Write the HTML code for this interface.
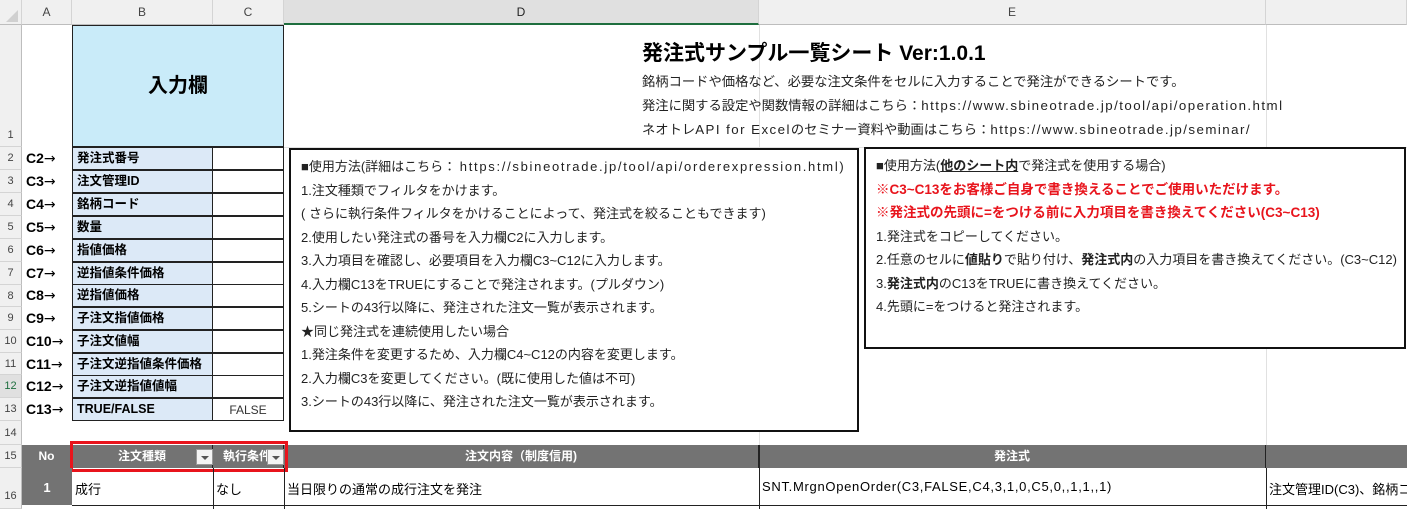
<!DOCTYPE html>
<html><head><meta charset="utf-8"><style>
*{margin:0;padding:0;box-sizing:border-box}
body{width:1407px;height:509px;overflow:hidden;background:#fff;position:relative;font-family:"Liberation Sans","Noto Sans CJK JP",sans-serif;color:#000}
.a{position:absolute}
.l{letter-spacing:1.45px}
.gl{position:absolute;background:#e1e1e1}
.hd{position:absolute;top:0;height:25px;background:#f0f0f0;border-right:1px solid #d4d4d4;border-bottom:1px solid #bdbdbd;font-size:12px;color:#444;text-align:center;line-height:25px}
.rn{position:absolute;left:0;width:22px;background:#f0f0f0;border-bottom:1px solid #d4d4d4;border-right:1px solid #bdbdbd;font-size:11px;color:#444;text-align:center}
.lab{position:absolute;left:72px;width:141px;height:23px;background:#dce9f7;border:1px solid #222;font-size:12.5px;font-weight:bold;line-height:21px;padding-left:4px;white-space:nowrap}
.cc{position:absolute;left:213px;width:71px;height:23px;border:1px solid #222;border-left:none}
.ar{position:absolute;left:26px;font-size:14px;font-weight:bold;line-height:23px}
.ar i{font-style:normal;font-family:"DejaVu Sans",sans-serif;font-weight:normal;font-size:14px}
.box{position:absolute;border:2px solid #111;background:#fff;font-size:13px;line-height:23.5px;padding:5px 0 0 10px;white-space:nowrap;color:#222}
.red{color:#e8141c;font-weight:bold}
.th{position:absolute;top:445px;height:23px;background:#737373;color:#fff;font-size:12px;font-weight:bold;text-align:center;line-height:23px;border-right:1px solid #222}
.dd{position:absolute;width:17px;height:16px;background:#f4f4f4;border:1px solid #999;top:449px}
.dd:after{content:"";position:absolute;left:4px;top:6px;border-left:4px solid transparent;border-right:4px solid transparent;border-top:4px solid #555}
</style></head><body>
<div class="gl" style="left:759px;top:25px;width:1px;height:420px"></div>
<div class="gl" style="left:1266px;top:25px;width:1px;height:420px"></div>
<div class="gl" style="left:284px;top:147px;width:1123px;height:1px"></div>
<div class="gl" style="left:284px;top:445px;width:1123px;height:1px"></div>
<div class="gl" style="left:22px;top:445px;width:50px;height:1px"></div>
<div class="gl" style="left:72px;top:25px;width:1px;height:122px"></div>
<div class="hd" style="left:0;width:22px;background:#f0f0f0"></div>
<div class="a" style="left:6px;top:10px;border-left:12px solid transparent;border-bottom:12px solid #d0d0d0"></div>
<div class="hd" style="left:22px;width:50px">A</div>
<div class="hd" style="left:72px;width:141px">B</div>
<div class="hd" style="left:213px;width:71px">C</div>
<div class="hd" style="left:284px;width:475px;background:#e0e0e0;border-bottom:2px solid #1e6e3e;color:#222">D</div>
<div class="hd" style="left:759px;width:507px">E</div>
<div class="hd" style="left:1266px;width:141px"></div>
<div class="rn" style="top:25px;height:122px;line-height:220px">1</div>
<div class="rn" style="top:147px;height:23px;line-height:23px">2</div>
<div class="rn" style="top:170px;height:23px;line-height:23px">3</div>
<div class="rn" style="top:193px;height:23px;line-height:23px">4</div>
<div class="rn" style="top:216px;height:23px;line-height:23px">5</div>
<div class="rn" style="top:239px;height:23px;line-height:23px">6</div>
<div class="rn" style="top:262px;height:23px;line-height:23px">7</div>
<div class="rn" style="top:285px;height:22px;line-height:22px">8</div>
<div class="rn" style="top:307px;height:23px;line-height:23px">9</div>
<div class="rn" style="top:330px;height:23px;line-height:23px">10</div>
<div class="rn" style="top:353px;height:22px;line-height:22px">11</div>
<div class="rn" style="top:375px;height:23px;line-height:23px;color:#1e6e3e;background:#e0e0e0">12</div>
<div class="rn" style="top:398px;height:23px;line-height:23px">13</div>
<div class="rn" style="top:421px;height:24px;line-height:24px">14</div>
<div class="rn" style="top:445px;height:23px;line-height:23px">15</div>
<div class="rn" style="top:468px;height:41px;line-height:56px">16</div>
<div class="a" style="left:72px;top:25px;width:212px;height:122px;background:#c9ebf9;border:1px solid #222;font-size:20px;font-weight:bold;text-align:center;line-height:120px">入力欄</div>
<div class="ar" style="top:147px">C2<i>→</i></div><div class="lab" style="top:147px">発注式番号</div><div class="cc" style="top:147px"></div>
<div class="ar" style="top:170px">C3<i>→</i></div><div class="lab" style="top:170px">注文管理ID</div><div class="cc" style="top:170px"></div>
<div class="ar" style="top:193px">C4<i>→</i></div><div class="lab" style="top:193px">銘柄コード</div><div class="cc" style="top:193px"></div>
<div class="ar" style="top:216px">C5<i>→</i></div><div class="lab" style="top:216px">数量</div><div class="cc" style="top:216px"></div>
<div class="ar" style="top:239px">C6<i>→</i></div><div class="lab" style="top:239px">指値価格</div><div class="cc" style="top:239px"></div>
<div class="ar" style="top:262px">C7<i>→</i></div><div class="lab" style="top:262px">逆指値条件価格</div><div class="cc" style="top:262px"></div>
<div class="ar" style="top:284px">C8<i>→</i></div><div class="lab" style="top:284px">逆指値価格</div><div class="cc" style="top:284px"></div>
<div class="ar" style="top:307px">C9<i>→</i></div><div class="lab" style="top:307px">子注文指値価格</div><div class="cc" style="top:307px"></div>
<div class="ar" style="top:330px">C10<i>→</i></div><div class="lab" style="top:330px">子注文値幅</div><div class="cc" style="top:330px"></div>
<div class="ar" style="top:353px">C11<i>→</i></div><div class="lab" style="top:353px">子注文逆指値条件価格</div><div class="cc" style="top:353px"></div>
<div class="ar" style="top:375px">C12<i>→</i></div><div class="lab" style="top:375px">子注文逆指値値幅</div><div class="cc" style="top:375px"></div>
<div class="ar" style="top:398px">C13<i>→</i></div><div class="lab" style="top:398px">TRUE/FALSE</div><div class="cc" style="top:398px;font-size:12px;text-align:center;line-height:22px;color:#333">FALSE</div>
<div class="a" style="left:642px;top:37px;font-size:21px;font-weight:bold;white-space:nowrap">発注式サンプル一覧シート Ver:1.0.1</div>
<div class="a" style="left:642px;top:70px;font-size:13.3px;line-height:24px;white-space:nowrap;color:#222">銘柄コードや価格など、必要な注文条件をセルに入力することで発注ができるシートです。<br>発注に関する設定や関数情報の詳細はこちら：<span class="l">https://www.sbineotrade.jp/tool/api/operation.html</span><br>ネオトレ<span class="l">API for Excel</span>のセミナー資料や動画はこちら：<span class="l">https://www.sbineotrade.jp/seminar/</span></div>
<div class="box" style="left:289px;top:148px;width:570px;height:284px">■使用方法(詳細はこちら： <span style="letter-spacing:1.7px">https://sbineotrade.jp/tool/api/orderexpression.html)</span><br>1.注文種類でフィルタをかけます。<br>( さらに執行条件フィルタをかけることによって、発注式を絞ることもできます)<br>2.使用したい発注式の番号を入力欄C2に入力します。<br>3.入力項目を確認し、必要項目を入力欄C3~C12に入力します。<br>4.入力欄C13をTRUEにすることで発注されます。(プルダウン)<br>5.シートの43行以降に、発注された注文一覧が表示されます。<br>★同じ発注式を連続使用したい場合<br>1.発注条件を変更するため、入力欄C4~C12の内容を変更します。<br>2.入力欄C3を変更してください。(既に使用した値は不可)<br>3.シートの43行以降に、発注された注文一覧が表示されます。</div>
<div class="box" style="left:864px;top:147px;width:542px;height:202px">■使用方法(<b><u>他のシート内</u></b>で発注式を使用する場合)<br><span class="red" style="font-size:13.5px">※C3~C13をお客様ご自身で書き換えることでご使用いただけます。</span><br><span class="red" style="font-size:13.5px">※発注式の先頭に=をつける前に入力項目を書き換えてください(C3~C13)</span><br>1.発注式をコピーしてください。<br>2.任意のセルに<b>値貼り</b>で貼り付け、<b>発注式内</b>の入力項目を書き換えてください。(C3~C12)<br>3.<b>発注式内</b>のC13をTRUEに書き換えてください。<br>4.先頭に=をつけると発注されます。</div>
<div class="th" style="left:22px;width:50px">No</div>
<div class="th" style="left:72px;width:141px">注文種類</div>
<div class="th" style="left:213px;width:71px;text-align:left;padding-left:10px">執行条件</div>
<div class="th" style="left:284px;width:475px">注文内容（制度信用)</div>
<div class="th" style="left:759px;width:507px">発注式</div>
<div class="th" style="left:1266px;width:141px;border-right:none"></div>
<div class="dd" style="left:196px"></div>
<div class="dd" style="left:267px"></div>
<div class="a" style="left:70px;top:441px;width:218px;height:31px;border:3px solid #e8141c"></div>
<div class="a" style="left:22px;top:468px;width:50px;height:37px;background:#737373;color:#fff;font-weight:bold;font-size:13px;text-align:center;line-height:40px">1</div>
<div class="a" style="left:72px;top:468px;width:1335px;height:38px;border-bottom:1px solid #222"></div>
<div class="a" style="left:213px;top:468px;width:1px;height:41px;background:#222"></div>
<div class="a" style="left:284px;top:468px;width:1px;height:41px;background:#222"></div>
<div class="a" style="left:759px;top:445px;width:1px;height:64px;background:#222"></div>
<div class="a" style="left:1266px;top:468px;width:1px;height:41px;background:#222"></div>
<div class="a" style="left:75px;top:479px;font-size:13px">成行</div>
<div class="a" style="left:216px;top:479px;font-size:13px">なし</div>
<div class="a" style="left:287px;top:479px;font-size:13px;white-space:nowrap">当日限りの通常の成行注文を発注</div>
<div class="a" style="left:762px;top:479px;font-size:13px;letter-spacing:0.7px;white-space:nowrap">SNT.MrgnOpenOrder(C3,FALSE,C4,3,1,0,C5,0,,1,1,,1)</div>
<div class="a" style="left:1269px;top:479px;font-size:13px;white-space:nowrap;width:138px;overflow:hidden">注文管理ID(C3)、銘柄コード</div>
</body></html>
